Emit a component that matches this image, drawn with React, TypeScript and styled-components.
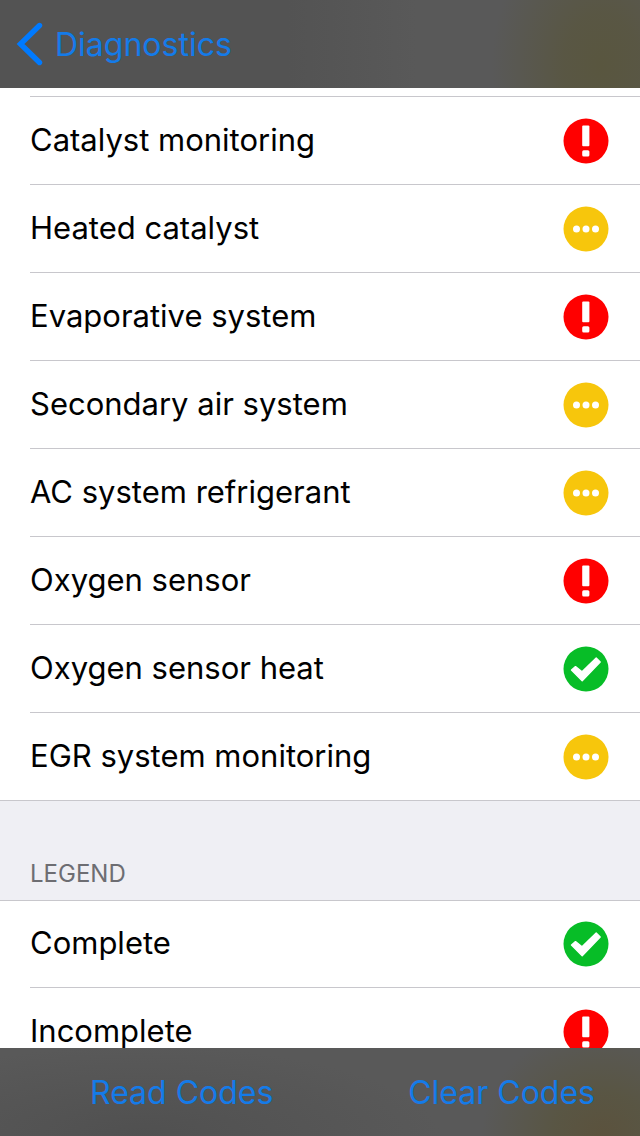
import React from "react";
import styled, { createGlobalStyle } from "styled-components";

const GlobalStyle = createGlobalStyle`
  *, *::before, *::after { box-sizing: border-box; }
  body {
    margin: 0;
    background: #fff;
    color: #000;
    font-family: Inter, "Liberation Sans", sans-serif;
  }
`;

const Screen = styled.div`
  display: flex;
  flex-direction: column;
  height: 100vh;
  overflow: hidden;
`;

const NavBar = styled.header`
  flex: none;
  display: flex;
  align-items: center;
  height: 88px;
  padding: 0 16px;
  background:
    radial-gradient(ellipse 110px 150px at 94% 75%, #59563f 0%, rgba(89, 86, 64, 0.85) 35%, rgba(89, 88, 76, 0) 100%),
    linear-gradient(90deg, #535353 0%, #535353 45%, #595959 65%, #595959 100%);
`;

const BackLink = styled.a`
  display: flex;
  align-items: center;
  gap: 12px;
  color: #147be9;
  font-size: 32px;
  line-height: 40px;
  text-decoration: none;
`;

const BackLabel = styled.span`
  padding-top: 2px;
`;

const Content = styled.main`
  flex: 1;
  min-height: 0;
  overflow: hidden;
  padding-top: 8px;
`;

const Rows = styled.ul<{ $overlap?: boolean; $topLine?: boolean }>`
  list-style: none;
  margin: ${(p) => (p.$overlap ? "-1px" : "0")} 0 0;
  padding: 0;
  &::before {
    content: "";
    display: ${(p) => (p.$topLine ? "block" : "none")};
    height: 1px;
    margin-left: 30px;
    background: #c8c7cc;
  }
`;

const Row = styled.li<{ $fullLine?: boolean }>`
  display: flex;
  align-items: center;
  justify-content: space-between;
  height: 88px;
  margin-left: ${(p) => (p.$fullLine ? "0" : "30px")};
  padding: 0 30px 0 ${(p) => (p.$fullLine ? "30px" : "0")};
  border-bottom: 1px solid #c8c7cc;
  font-size: 31px;
  line-height: 40px;
`;

const RowLabel = styled.span`
  padding-bottom: 2px;
`;

const SectionTitle = styled.h2`
  display: flex;
  align-items: flex-end;
  height: 100px;
  margin: 0;
  padding: 0 30px 12px;
  border-bottom: 1px solid #c8c7cc;
  background: #efeff4;
  color: #6d6d72;
  font-size: 24px;
  font-weight: 400;
  line-height: 28px;
`;

const Toolbar = styled.footer`
  flex: none;
  display: flex;
  align-items: center;
  justify-content: space-between;
  height: 88px;
  padding: 2px 45px 0 90px;
  background:
    radial-gradient(ellipse 120px 110px at 94% 100%, #5b523d 0%, rgba(89, 85, 64, 0.85) 40%, rgba(89, 88, 76, 0) 100%),
    radial-gradient(ellipse 300px 90px at 22% 100%, #505050 0%, #595959 100%);
`;

const ToolButton = styled.button`
  padding: 0;
  border: 0;
  background: none;
  color: #147be9;
  font-family: inherit;
  font-size: 32px;
  line-height: 40px;
  cursor: pointer;
`;

type Status = "complete" | "incomplete" | "unavailable";

const statusColor: Record<Status, string> = {
  complete: "#07bd27",
  incomplete: "#ff0000",
  unavailable: "#f7c60c",
};

function StatusIcon({ status }: { status: Status }) {
  return (
    <svg width="48" height="48" viewBox="0 0 48 48" role="img" aria-label={status}>
      <circle cx="24" cy="24" r="22.5" fill={statusColor[status]} />
      {status === "incomplete" && (
        <g fill="#fff">
          <rect x="20.2" y="8.6" width="7.2" height="20.6" rx="1" />
          <rect x="20.2" y="33.2" width="7.2" height="6.4" rx="1.5" />
        </g>
      )}
      {status === "unavailable" && (
        <g fill="#fff">
          <circle cx="14.5" cy="24" r="3.5" />
          <circle cx="24" cy="24" r="3.5" />
          <circle cx="33.5" cy="24" r="3.5" />
        </g>
      )}
      {status === "complete" && (
        <path
          d="M9.5 25L13.5 21.6L20 26.8L34.2 13L38.2 17L20.2 35.8Z"
          fill="#fff"
          stroke="#fff"
          strokeWidth="1.4"
          strokeLinejoin="round"
        />
      )}
    </svg>
  );
}

const monitors: { name: string; status: Status }[] = [
  { name: "Catalyst monitoring", status: "incomplete" },
  { name: "Heated catalyst", status: "unavailable" },
  { name: "Evaporative system", status: "incomplete" },
  { name: "Secondary air system", status: "unavailable" },
  { name: "AC system refrigerant", status: "unavailable" },
  { name: "Oxygen sensor", status: "incomplete" },
  { name: "Oxygen sensor heat", status: "complete" },
  { name: "EGR system monitoring", status: "unavailable" },
];

const legend: { name: string; status: Status }[] = [
  { name: "Complete", status: "complete" },
  { name: "Incomplete", status: "incomplete" },
];

export default function App() {
  return (
    <Screen>
      <GlobalStyle />
      <NavBar>
        <BackLink href="#diagnostics">
          <svg width="27" height="44" viewBox="0 0 27 44" aria-hidden="true">
            <path d="M23.5 3.5L4.5 22L23.5 40.5" fill="none" stroke="#007aff" strokeWidth="5.4" strokeLinecap="round" />
          </svg>
          <BackLabel>Diagnostics</BackLabel>
        </BackLink>
      </NavBar>
      <Content>
        <Rows $topLine>
          {monitors.map((m, i) => (
            <Row key={m.name} $fullLine={i === monitors.length - 1}>
              <RowLabel>{m.name}</RowLabel>
              <StatusIcon status={m.status} />
            </Row>
          ))}
        </Rows>
        <SectionTitle>LEGEND</SectionTitle>
        <Rows $overlap>
          {legend.map((m) => (
            <Row key={m.name}>
              <RowLabel>{m.name}</RowLabel>
              <StatusIcon status={m.status} />
            </Row>
          ))}
        </Rows>
      </Content>
      <Toolbar>
        <ToolButton type="button">Read Codes</ToolButton>
        <ToolButton type="button">Clear Codes</ToolButton>
      </Toolbar>
    </Screen>
  );
}
